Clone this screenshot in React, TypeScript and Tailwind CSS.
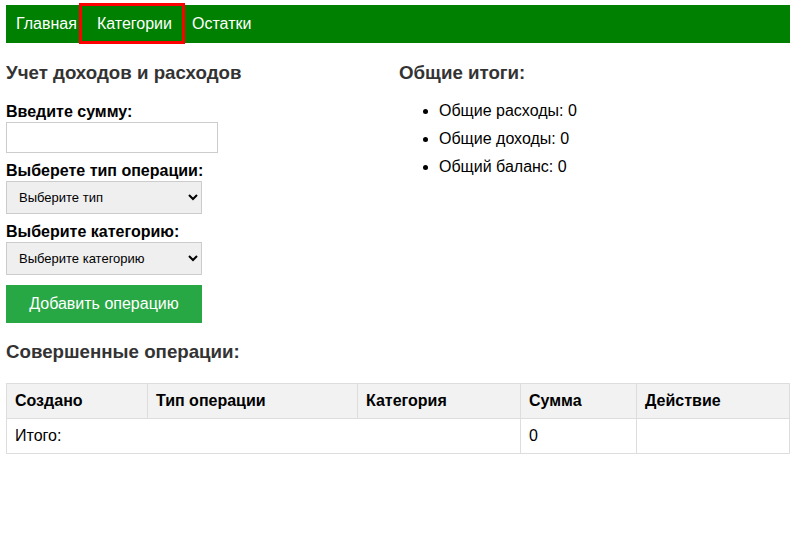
import React from "react"

export default function App() {
  const summary = ["Общие расходы: 0", "Общие доходы: 0", "Общий баланс: 0"]
  const columns = [
    { title: "Создано", w: "w-[141px]" },
    { title: "Тип операции", w: "w-[210px]" },
    { title: "Категория", w: "w-[163px]" },
    { title: "Сумма", w: "w-[116px]" },
    { title: "Действие", w: "" },
  ]

  return (
    <div className="min-h-[537px] bg-white px-[6px] pt-[5px] font-['Liberation_Sans',Arial,sans-serif] text-black">
      {/* Nav */}
      <nav className="flex h-[38px] items-stretch bg-[#008000] text-[16px] text-white">
        <a className="flex items-center px-[10px]">Главная</a>
        <a className="relative flex items-center px-[10px]">
          Категории
          {/* highlight frame */}
          <span className="pointer-events-none absolute -left-[8px] -right-[3px] -top-[2px] -bottom-[1px] border-[3px] border-[#ff0000]" />
        </a>
        <a className="flex items-center px-[10px]">Остатки</a>
      </nav>

      <div className="grid grid-cols-2">
        {/* Form */}
        <div>
          <h3 className="mt-[19px] text-[18.72px] font-bold leading-[22px] text-[#333]">Учет доходов и расходов</h3>

          <label className="mt-[19px] block text-[16px] font-bold leading-[18px]">Введите сумму:</label>
          <input
            type="text"
            className="mt-[1px] block h-[31px] w-[212px] border border-[#ccc] bg-white px-2 text-[14px]"
          />

          <label className="mt-[9px] block text-[16px] font-bold leading-[18px]">Выберете тип операции:</label>
          <select className="mt-[1px] block h-[33px] w-[196px] border border-[#ccc] bg-[#efefef] px-[8px] text-[13px] text-black">
            <option>Выберите тип</option>
          </select>

          <label className="mt-[9px] block text-[16px] font-bold leading-[18px]">Выберите категорию:</label>
          <select className="mt-[1px] block h-[33px] w-[196px] border border-[#ccc] bg-[#efefef] px-[8px] text-[13px] text-black">
            <option>Выберите категорию</option>
          </select>

          <button className="mt-[10px] flex h-[38px] w-[196px] items-center justify-center bg-[#28a745] text-[16px] text-white">
            Добавить операцию
          </button>
        </div>

        {/* Totals */}
        <div className="pl-[1px]">
          <h3 className="mt-[19px] text-[18.72px] font-bold leading-[22px] text-[#333]">Общие итоги:</h3>
          <ul className="mt-[13px] list-disc pl-[40px] text-[16px]">
            {summary.map((s) => (
              <li key={s} className="leading-[28px]">
                {s}
              </li>
            ))}
          </ul>
        </div>
      </div>

      <h3 className="mt-[18px] text-[18.72px] font-bold leading-[22px] text-[#333]">Совершенные операции:</h3>

      <table className="mt-[20px] w-full border-collapse text-[16px]">
        <thead>
          <tr className="bg-[#f2f2f2]">
            {columns.map((c) => (
              <th key={c.title} className={`${c.w} h-[35px] border border-[#ddd] px-[8px] text-left font-bold`}>
                {c.title}
              </th>
            ))}
          </tr>
        </thead>
        <tbody>
          <tr>
            <td colSpan={3} className="h-[35px] border border-[#ddd] px-[8px]">
              Итого:
            </td>
            <td className="border border-[#ddd] px-[8px]">0</td>
            <td className="border border-[#ddd] px-[8px]"></td>
          </tr>
        </tbody>
      </table>
    </div>
  )
}
